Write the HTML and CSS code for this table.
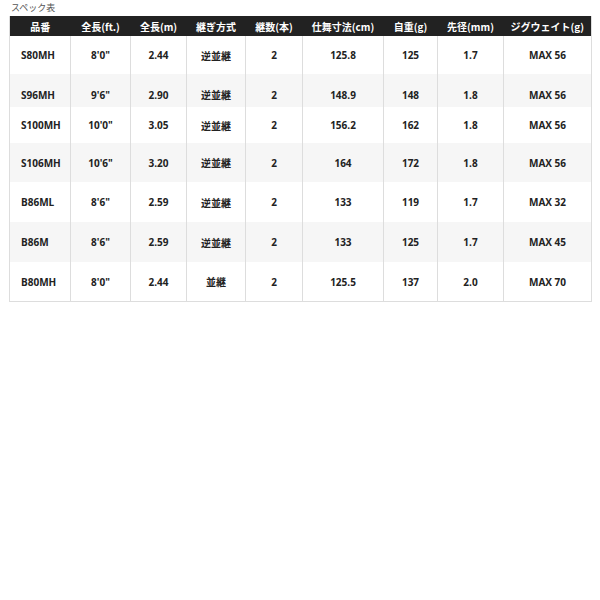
FILE: index.html
```html
<!DOCTYPE html>
<html lang="ja">
<head>
<meta charset="utf-8">
<link rel="stylesheet" href="styles.css">
</head>
<body>
<div class="wrap">
  <div class="title">スペック表</div>
  <table class="spec">
    <colgroup>
      <col class="c1"><col class="c2"><col class="c3"><col class="c4"><col class="c5"><col class="c6"><col class="c7"><col class="c8"><col class="c9">
    </colgroup>
    <thead>
      <tr><th>品番</th><th>全長(ft.)</th><th>全長(m)</th><th>継ぎ方式</th><th>継数(本)</th><th>仕舞寸法(cm)</th><th>自重(g)</th><th>先径(mm)</th><th>ジグウェイト(g)</th></tr>
    </thead>
    <tbody>
      <tr class="h38"><td>S80MH</td><td>8'0"</td><td>2.44</td><td>逆並継</td><td>2</td><td>125.8</td><td>125</td><td>1.7</td><td>MAX 56</td></tr>
      <tr class="alt h33 low"><td>S96MH</td><td>9'6"</td><td>2.90</td><td>逆並継</td><td>2</td><td>148.9</td><td>148</td><td>1.8</td><td>MAX 56</td></tr>
      <tr class="h36"><td>S100MH</td><td>10'0"</td><td>3.05</td><td>逆並継</td><td>2</td><td>156.2</td><td>162</td><td>1.8</td><td>MAX 56</td></tr>
      <tr class="alt h39"><td>S106MH</td><td>10'6"</td><td>3.20</td><td>逆並継</td><td>2</td><td>164</td><td>172</td><td>1.8</td><td>MAX 56</td></tr>
      <tr class="h40"><td>B86ML</td><td>8'6"</td><td>2.59</td><td>逆並継</td><td>2</td><td>133</td><td>119</td><td>1.7</td><td>MAX 32</td></tr>
      <tr class="alt h40"><td>B86M</td><td>8'6"</td><td>2.59</td><td>逆並継</td><td>2</td><td>133</td><td>125</td><td>1.7</td><td>MAX 45</td></tr>
      <tr class="h39"><td>B80MH</td><td>8'0"</td><td>2.44</td><td>並継</td><td>2</td><td>125.5</td><td>137</td><td>2.0</td><td>MAX 70</td></tr>
    </tbody>
  </table>
</div>
</body>
</html>
```
FILE: styles.css
```css
html, body {
  margin: 0;
  padding: 0;
  background: #fff;
}
.wrap {
  padding: 1px 9px 0 9px;
  font-family: "Open Sans", "Noto Sans CJK JP", sans-serif;
  color: #222;
}
.title {
  font-size: 9px;
  line-height: 14px;
  color: #555;
  padding-left: 2px;
  font-family: "Noto Sans CJK JP", sans-serif;
}
.spec {
  width: 582px;
  border-collapse: collapse;
  table-layout: fixed;
  font-size: 10px;
  font-weight: 700;
  border-bottom: 1px solid #ddd;
  border-left: 1px solid #ddd;
  border-right: 1px solid #ddd;
  margin-top: 1px;
}
.c1 { width: 61px; }
.c2 { width: 60px; }
.c3 { width: 56px; }
.c4 { width: 59px; }
.c5 { width: 57px; }
.c6 { width: 81px; }
.c7 { width: 54px; }
.c8 { width: 66px; }
.c9 { width: 88px; }
.spec th {
  background: #222;
  color: #fff;
  height: 20px;
  padding: 0;
  font-weight: 700;
  font-family: "Noto Sans CJK JP", sans-serif;
  font-size: 10px;
  text-align: center;
}
.spec td {
  text-align: center;
  padding: 0;
  border-left: 1px solid #ddd;
  vertical-align: middle;
}
.spec td:first-child {
  border-left: none;
  text-align: left;
  padding-left: 11px;
}
.spec td:nth-child(4) {
  font-family: "Noto Sans CJK JP", sans-serif;
}
.alt td { background: #f6f6f6; }
.h33 td { height: 33px; }
.h36 td { height: 36px; }
.h38 td { height: 38px; }
.h39 td { height: 39px; }
.h40 td { height: 40px; }
.low td { padding-top: 8px; height: 25px; }
```
